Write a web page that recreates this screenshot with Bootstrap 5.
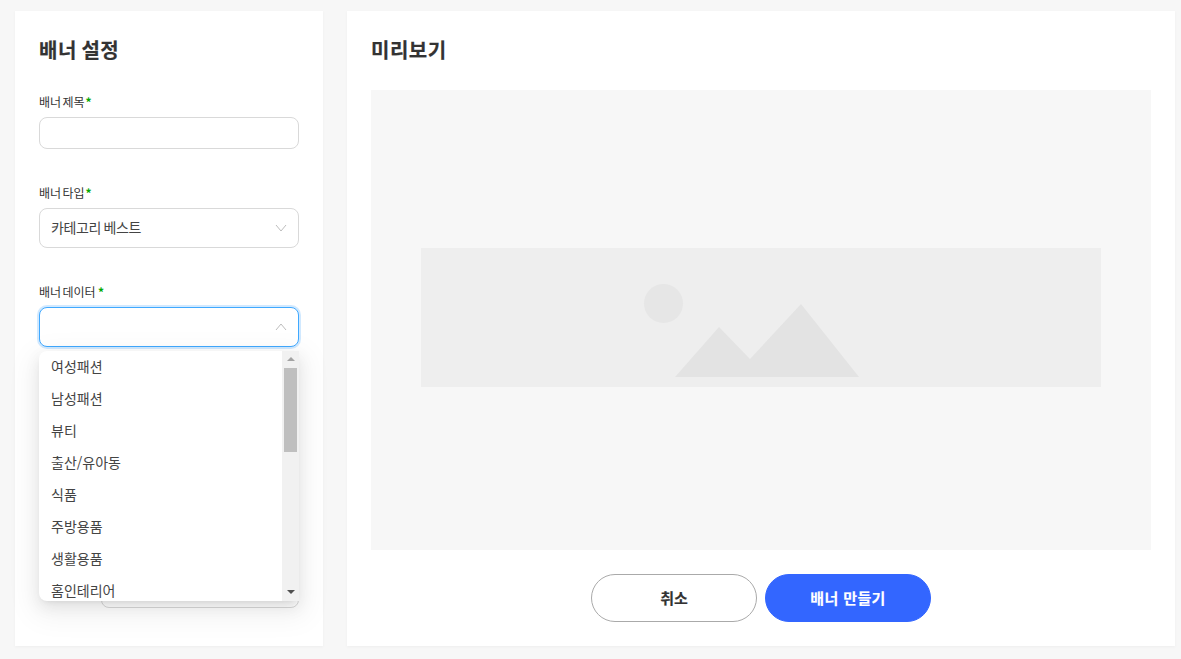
<!DOCTYPE html>
<html lang="ko">
<head>
<meta charset="utf-8">
<title>배너 설정</title>
<link rel="stylesheet" href="https://cdn.jsdelivr.net/npm/bootstrap@5.3.0/dist/css/bootstrap.min.css">
<style>
html,body{height:100%;overflow:hidden}
body{background:#f7f7f7;font-family:"Noto Sans CJK KR","Noto Sans",sans-serif;color:#333;font-size:14px}
.page-wrap{height:659px;padding:11px 6px 13px 15px;gap:24px}
.panel{background:#fff;box-shadow:0 1px 3px rgba(0,0,0,.04);padding:24px}
.panel-left{width:308px;flex:none}
.panel-title{font-size:20px;line-height:30px;font-weight:700;color:#333;margin:0 0 27px;letter-spacing:.5px;word-spacing:-1.500px;-webkit-text-stroke:.2px #333}
.panel-main .panel-title{margin-bottom:25px}
.field{margin-bottom:34px}
.field-label{display:block;font-size:12px;line-height:20px;font-weight:400;color:#333;margin-bottom:5px;word-spacing:-2px}
.req{color:#00a800;font-weight:700;font-size:12px;margin-left:1px}
.txt-input.form-control{height:32px;border:1px solid #d9d9d9;border-radius:8px;padding:0 11px;box-shadow:none}
.sel-box{height:40px;border:1px solid #d9d9d9;border-radius:8px;padding:0 11px 0 11px;font-size:14px;color:#444;background:#fff}
.sel-text{display:block;line-height:20px;margin-bottom:2px;letter-spacing:-.35px;word-spacing:-1.200px}
.sel-box.is-open{border-color:#40a9ff;box-shadow:0 0 0 2px rgba(24,144,255,.2)}
.chev{width:12px;height:8px;flex:none}
.field-wrap{position:relative}
.field-open{margin-bottom:0}
.drop-menu{position:absolute;left:0;top:69px;width:260px;height:250px;background:#fff;border-radius:8px 0 0 8px;overflow:hidden;z-index:5;box-shadow:0 3px 6px -4px rgba(0,0,0,.12),0 6px 16px rgba(0,0,0,.08),0 9px 28px 8px rgba(0,0,0,.05)}
.drop-list{flex:1;overflow:hidden;margin:0;padding:0;list-style:none}
.drop-item{height:32px;line-height:31px;padding:0 12px;font-size:14px;color:#444;white-space:nowrap}
.sbar{width:17px;flex:none;background:#f1f1f1;position:relative}
.sbar-thumb{position:absolute;left:2px;top:17px;width:13px;height:84px;background:#bfbfbf}
.sbar-up,.sbar-down{position:absolute;left:5px;width:0;height:0;border-left:4px solid transparent;border-right:4px solid transparent}
.sbar-up{top:6px;border-bottom:4px solid #a3a3a3}
.sbar-down{bottom:7px;border-top:4px solid #505050}
.hidden-row{margin-top:auto;margin-bottom:14px;padding-left:62px}
.hidden-row .sel-box{width:198px}
.preview-area{background:#f7f7f7;height:460px;flex:none}
.preview-band{width:680px;height:139px;background:#eee;margin-top:-5px}
.preview-art{display:block;width:680px;height:139px}
.btn-row{margin-top:24px;gap:8px}
.act-btn.btn{width:166px;height:48px;border-radius:24px;font-size:15px;font-weight:700;padding:0;line-height:46px;-webkit-text-stroke:.15px}
.act-cancel.btn{background:#fff;border:1px solid #aaa;color:#333}
.act-ok.btn{background:#3366ff;border:1px solid #3366ff;color:#fff;letter-spacing:.4px}
</style>
</head>
<body>
<div class="page-wrap d-flex">
  <aside class="panel panel-left d-flex flex-column">
    <h2 class="panel-title">배너 설정</h2>
    <div class="field">
      <label class="field-label">배너 제목<span class="req">*</span></label>
      <input type="text" class="form-control txt-input">
    </div>
    <div class="field">
      <span class="field-label">배너 타입<span class="req">*</span></span>
      <div class="sel-box d-flex align-items-center justify-content-between">
        <span class="sel-text">카테고리 베스트</span>
        <svg class="chev" viewBox="0 0 12 8" fill="none" stroke="#bdbdbd" stroke-width="1"><path d="M1 1l5 6 5-6"/></svg>
      </div>
    </div>
    <div class="field field-open field-wrap">
      <span class="field-label">배너 데이터 <span class="req">*</span></span>
      <div class="sel-box is-open d-flex align-items-center justify-content-end">
        <svg class="chev" viewBox="0 0 12 8" fill="none" stroke="#bdbdbd" stroke-width="1"><path d="M1 7l5-6 5 6"/></svg>
      </div>
      <div class="drop-menu d-flex">
        <ul class="drop-list">
          <li class="drop-item">여성패션</li>
          <li class="drop-item">남성패션</li>
          <li class="drop-item">뷰티</li>
          <li class="drop-item">출산/유아동</li>
          <li class="drop-item">식품</li>
          <li class="drop-item">주방용품</li>
          <li class="drop-item">생활용품</li>
          <li class="drop-item">홈인테리어</li>
        </ul>
        <div class="sbar"><span class="sbar-up"></span><span class="sbar-thumb"></span><span class="sbar-down"></span></div>
      </div>
    </div>
    <div class="hidden-row"><div class="sel-box"></div></div>
  </aside>
  <main class="panel panel-main flex-grow-1 d-flex flex-column">
    <h2 class="panel-title">미리보기</h2>
    <div class="preview-area d-flex align-items-center justify-content-center">
      <div class="preview-band">
        <svg class="preview-art" viewBox="0 0 680 139">
          <circle cx="242.500" cy="55.500" r="19.500" fill="#e6e6e6"/>
          <path d="M254 129L298 79l31 32 51-55 58 73z" fill="#e3e3e3"/>
        </svg>
      </div>
    </div>
    <div class="btn-row d-flex justify-content-center">
      <button type="button" class="btn act-btn act-cancel">취소</button>
      <button type="button" class="btn act-btn act-ok">배너 만들기</button>
    </div>
  </main>
</div>
<script src="https://cdn.jsdelivr.net/npm/bootstrap@5.3.0/dist/js/bootstrap.bundle.min.js"></script>
</body>
</html>
